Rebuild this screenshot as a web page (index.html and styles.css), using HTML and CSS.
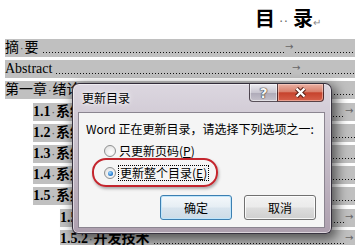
FILE: index.html
```html
<!DOCTYPE html>
<html lang="zh-CN">
<head>
  <meta charset="UTF-8" />
  <title>更新目录</title>
  <link rel="stylesheet" href="styles.css">
</head>
<body>
  <div class="page">
    <div class="doc-title">目<span class="sp">··</span>录<span class="para">↵</span></div>

    <div class="toc">
      <div class="toc-row lv1"><span class="t">摘<i>·</i>要</span><span class="dots"></span><span class="tab">→</span><span class="dots tail-60"></span></div>
      <div class="toc-row lv1"><span class="t">Abstract</span><span class="dots"></span><span class="tab">→</span><span class="dots tail-53"></span></div>
      <div class="toc-row lv1"><span class="t">第一章<i>·</i>绪论</span><span class="dots"></span></div>
      <div class="toc-row lv2"><span class="t">1.1<i>·</i>系统开发背景</span><span class="dots"></span><span class="tab">→</span></div>
      <div class="toc-row lv2"><span class="t">1.2<i>·</i>系统开发意义</span><span class="dots"></span></div>
      <div class="toc-row lv2"><span class="t">1.3<i>·</i>系统研究现状</span><span class="dots"></span></div>
      <div class="toc-row lv2"><span class="t">1.4<i>·</i>系统开发目标</span><span class="dots"></span></div>
      <div class="toc-row lv2"><span class="t">1.5<i>·</i>系统开发方法</span><span class="dots"></span></div>
      <div class="toc-row lv3"><span class="t">1.5.1<i>·</i>开发环境</span><span class="dots"></span><span class="tab">→</span></div>
      <div class="toc-row lv3"><span class="t">1.5.2<i>·</i>开发技术</span><span class="dots"></span><span class="tab">→</span></div>
    </div>

    <!-- 更新目录 dialog, floating over the document -->
    <div class="dialog">
      <div class="dlg-caption">
        <span class="dlg-title">更新目录</span>
        <div class="cap-btns">
          <span class="cap-help">?</span>
          <span class="cap-close">
            <svg width="13" height="11" viewBox="0 0 13 11">
              <path d="M2.5 1.5l8 8M10.5 1.5l-8 8" stroke="#5a2218" stroke-width="4.4" fill="none"/>
              <path d="M2.5 1.5l8 8M10.5 1.5l-8 8" stroke="#fff" stroke-width="2.4" fill="none"/>
            </svg>
          </span>
        </div>
      </div>
      <div class="dlg-client">
        <p class="dlg-msg">Word 正在更新目录，请选择下列选项之一:</p>
        <div class="opt opt-first"><span class="radio"></span>只更新页码(<u>P</u>)</div>
        <div class="mark">
          <div class="opt"><span class="radio on"></span><span class="focus">更新整个目录(<u>E</u>)</span></div>
        </div>
        <div class="dlg-btns">
          <button class="btn btn-default">确定</button>
          <button class="btn">取消</button>
        </div>
      </div>
    </div>
  </div>
</body>
</html>
```

FILE: styles.css
```css
* {
  box-sizing: border-box;
}
body {
  margin: 0;
  background: #fff;
  font-family: "Liberation Serif", "Noto Sans CJK SC", serif;
  color: #000;
}
.page {
  position: relative;
  width: 355px;
  height: 245px;
  overflow: hidden;
}

/* document heading */
.doc-title {
  height: 39px;
  padding: 6px 0 0 255px;
  font: bold 20px/24px "Noto Sans CJK SC", sans-serif;
  white-space: nowrap;
}
.doc-title .sp {
  display: inline-block;
  width: 18px;
  text-align: center;
  font: 12px/1 "DejaVu Sans", sans-serif;
  letter-spacing: 1px;
  color: #666;
  vertical-align: 0;
}
.doc-title .para {
  font-size: 10px;
  font-weight: normal;
  color: #888;
}

/* table of contents rows */
.toc {
  display: flex;
  flex-direction: column;
  gap: 3.2px;
}
.toc-row {
  display: flex;
  height: 18px;
  background: #c0c0c0;
  font-size: 14px;
  line-height: 18px;
  white-space: nowrap;
}
.lv1 {
  margin-left: 5px;
}
.lv2 {
  margin-left: 33px;
  font-weight: bold;
}
.lv3 {
  margin-left: 60px;
  font-weight: bold;
}
.toc-row .t {
  padding-right: 4px;
}
.toc-row i {
  font: 11px/18px "DejaVu Sans", sans-serif;
  color: #555;
  padding: 0 1px;
}
.dots {
  flex: 1;
  height: 1px;
  align-self: flex-end;
  margin-bottom: 4px;
  background: linear-gradient(to right, #111 1px, transparent 1px) 0 0 / 3px 1px repeat-x;
}
.tab {
  width: 10px;
  font: 10px/16px "DejaVu Sans", sans-serif;
  color: #666;
}
.tail-60 {
  flex: 0 0 60px;
}
.tail-53 {
  flex: 0 0 53px;
}

/* dialog window */
.dialog {
  position: absolute;
  left: 72px;
  top: 83px;
  width: 260px;
  height: 151px;
  padding: 0 6px 5px 5px;
  display: flex;
  flex-direction: column;
  border: 1px solid rgba(28, 24, 36, 0.85);
  border-radius: 7px 7px 6px 6px;
  background: linear-gradient(to bottom, #dcd7e0, #c9c1cc 40%, #ad9fae);
  box-shadow: inset 0 0 0 1px rgba(255, 255, 255, 0.55), 3px 4px 12px 2px rgba(0, 0, 0, 0.55);
  font-family: "Noto Sans CJK SC", sans-serif;
  font-size: 12px;
}
.dlg-caption {
  height: 28px;
  display: flex;
  align-items: flex-start;
}
.dlg-title {
  margin: 6px 0 0 4px;
  line-height: 16px;
  text-shadow: 0 0 6px #fff, 0 0 3px #fff;
}
.cap-btns {
  margin: 0 1px 0 auto;
  display: flex;
  height: 18px;
}
.cap-help,
.cap-close {
  display: flex;
  align-items: center;
  justify-content: center;
  height: 18px;
  border: 1px solid rgba(40, 30, 40, 0.75);
  border-top: none;
}
.cap-help {
  width: 28px;
  border-right: none;
  border-radius: 0 0 0 4px;
  background: linear-gradient(to bottom, #ecebf0, #c9c6d0 50%, #aeaab8 52%, #c6c2cc);
  box-shadow: inset 0 0 0 1px rgba(255, 255, 255, 0.5);
  color: #f6f6f6;
  font: bold 14px/1 "DejaVu Sans", sans-serif;
  text-shadow: 0 0 1px #333, 0 0 1px #333, 0 0 1px #333;
}
.cap-close {
  width: 47px;
  border-radius: 0 0 4px 0;
  background: linear-gradient(to bottom, #eab1a4, #d9806c 45%, #c6432d 52%, #d6604a);
  box-shadow: inset 0 0 0 1px rgba(255, 220, 210, 0.5);
}

.dlg-client {
  flex: 1;
  background: #f5f5f5;
  border: 1px solid #8b8590;
  padding: 8px 0 0 7px;
}
.dlg-msg {
  margin: 0;
  line-height: 16px;
  white-space: nowrap;
}
.opt {
  display: flex;
  align-items: center;
  line-height: 14px;
  white-space: nowrap;
}
.opt-first {
  margin: 7px 0 0 18px;
}
.radio {
  width: 12px;
  height: 12px;
  margin-right: 3px;
  border-radius: 50%;
  border: 1px solid #8e8f8f;
  background: radial-gradient(circle at 60% 65%, #fff, #dcdcdc);
  position: relative;
}
.radio.on {
  margin-right: 2px;
}
.radio.on::after {
  content: "";
  position: absolute;
  left: 2.5px;
  top: 2.5px;
  width: 5px;
  height: 5px;
  border-radius: 50%;
  background: radial-gradient(circle at 40% 35%, #a9dcff, #2a7fd0 60%, #174f91);
}
.focus {
  border: 1px dotted #000;
  padding: 0 1px;
  line-height: 14px;
}
.mark {
  width: 126px;
  height: 29px;
  margin-left: 6px;
  padding: 5px 0 0 10px;
  border: 2px solid #c4262e;
  border-radius: 14px;
  box-shadow: 1px 2px 3px rgba(0, 0, 0, 0.3);
}
.dlg-btns {
  display: flex;
  justify-content: flex-end;
  gap: 12px;
  margin: 8px 8px 0 0;
}
.btn {
  width: 72px;
  height: 25px;
  padding: 0;
  border: 1px solid #707070;
  border-radius: 3px;
  background: linear-gradient(to bottom, #f2f2f2, #ebebeb 48%, #dddddd 52%, #cfcfcf);
  box-shadow: inset 0 0 0 1px rgba(255, 255, 255, 0.8);
  font: 12px/1 "Noto Sans CJK SC", sans-serif;
  color: #000;
}
.btn-default {
  border-color: #3c7fb1;
  background: linear-gradient(to bottom, #f4f8fb, #e6eef4 48%, #d8e4ee 52%, #cddbe6);
  box-shadow: inset 0 0 0 1px #bfe5fb;
}
```
